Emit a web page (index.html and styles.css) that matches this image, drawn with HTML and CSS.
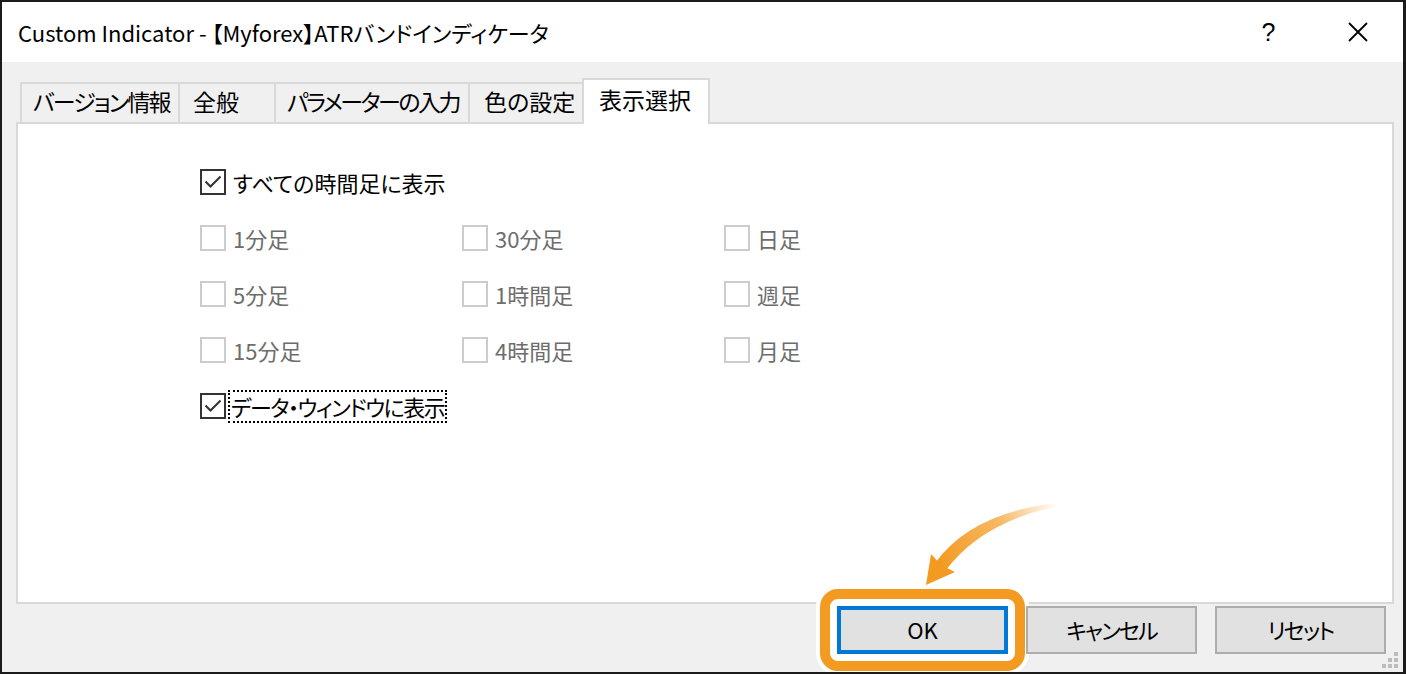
FILE: index.html
```html
<!DOCTYPE html>
<html lang="ja">
<head>
  <meta charset="UTF-8">
  <title>Custom Indicator</title>
  <link rel="stylesheet" href="styles.css">
</head>
<body>
  <div class="window">
    <div class="titlebar">
      <span class="title">Custom Indicator - 【Myforex】ATRバンドインディケータ</span>
      <span class="caption-btn help">?</span>
      <span class="caption-btn close">
        <svg width="20" height="20" viewBox="0 0 20 20"><path d="M1 1L19 19M19 1L1 19" stroke="#000" stroke-width="1.8" fill="none"/></svg>
      </span>
    </div>

    <div class="content">
      <div class="tabs">
        <div class="tab tab-version">バージョン情報</div>
        <div class="tab tab-general">全般</div>
        <div class="tab tab-params">パラメーターの入力</div>
        <div class="tab tab-colors">色の設定</div>
        <div class="tab tab-active">表示選択</div>
      </div>

      <div class="panel">
        <div class="options">
          <label class="check wide">
            <span class="box checked"><svg viewBox="0 0 22 22"><path d="M3.5 10.5L8.5 15.5L18.5 5.5" stroke="#333" stroke-width="2" fill="none"/></svg></span>
            <span>すべての時間足に表示</span>
          </label>
          <label class="check disabled"><span class="box"></span><span>1分足</span></label>
          <label class="check disabled"><span class="box"></span><span>30分足</span></label>
          <label class="check disabled"><span class="box"></span><span>日足</span></label>
          <label class="check disabled"><span class="box"></span><span>5分足</span></label>
          <label class="check disabled"><span class="box"></span><span>1時間足</span></label>
          <label class="check disabled"><span class="box"></span><span>週足</span></label>
          <label class="check disabled"><span class="box"></span><span>15分足</span></label>
          <label class="check disabled"><span class="box"></span><span>4時間足</span></label>
          <label class="check disabled"><span class="box"></span><span>月足</span></label>
          <label class="check wide">
            <span class="box checked"><svg viewBox="0 0 22 22"><path d="M3.5 10.5L8.5 15.5L18.5 5.5" stroke="#333" stroke-width="2" fill="none"/></svg></span>
            <span class="focus">データ・ウィンドウに表示</span>
          </label>
        </div>
      </div>

      <div class="footer">
        <div class="callout"><button class="btn btn-default">OK</button></div>
        <button class="btn">キャンセル</button>
        <button class="btn">リセット</button>
      </div>
    </div>

    <svg class="grip" width="16" height="16" viewBox="0 0 16 16">
      <rect x="12" y="0" width="4" height="4"/>
      <rect x="6" y="6" width="4" height="4"/>
      <rect x="12" y="6" width="4" height="4"/>
      <rect x="0" y="12" width="4" height="4"/>
      <rect x="6" y="12" width="4" height="4"/>
      <rect x="12" y="12" width="4" height="4"/>
    </svg>
  </div>

  <!-- annotation arrow pointing at OK -->
  <svg class="arrow" width="1406" height="674" viewBox="0 0 1406 674">
    <defs>
      <linearGradient id="fade" gradientUnits="userSpaceOnUse" x1="1058" y1="504" x2="940" y2="566">
        <stop offset="0" stop-color="#f39a21" stop-opacity="0"/>
        <stop offset="0.45" stop-color="#f39a21" stop-opacity="0.7"/>
        <stop offset="1" stop-color="#f39a21"/>
      </linearGradient>
    </defs>
    <path d="M1058 503Q972 512 935 563L946 570Q982 522 1058 506Z" fill="url(#fade)"/>
    <path d="M926 585L931 554L941 565L955 572Z" fill="#f39a21"/>
  </svg>
</body>
</html>
```

FILE: styles.css
```css
body {
  margin: 0;
  position: relative;
  font-family: "Noto Sans CJK JP", sans-serif;
  font-feature-settings: "palt";
  color: #000;
}
.window {
  width: 1406px;
  height: 674px;
  box-sizing: border-box;
  border: 2px solid #1b1b1b;
  border-right-width: 3px;
  background: #f0f0f0;
  display: flex;
  flex-direction: column;
  overflow: hidden;
  position: relative;
}
.titlebar {
  height: 60px;
  flex: none;
  background: #fff;
  display: flex;
  align-items: center;
  padding-left: 16px;
}
.title {
  font-size: 22px;
  flex: 1;
  padding-bottom: 1px;
}
.caption-btn {
  width: 91px;
  height: 60px;
  display: flex;
  align-items: center;
  justify-content: center;
}
.help {
  font-family: "Liberation Sans", sans-serif;
  font-size: 25px;
  padding-left: 4px;
  box-sizing: border-box;
}
.content {
  flex: 1;
  padding: 16px 9px 0 14px;
}
.tabs {
  display: flex;
  align-items: flex-end;
  height: 44px;
  padding-left: 4px;
}
.tab {
  height: 40px;
  box-sizing: border-box;
  border: 2px solid #d9d9d9;
  border-bottom: 0;
  margin-left: -2px;
  padding: 0 0 5px 11px;
  display: flex;
  align-items: center;
  font-size: 23px;
  white-space: nowrap;
}
.tab-version { width: 160px; margin-left: 0; letter-spacing: -1.9px; }
.tab-general { width: 98px; padding-left: 13px; }
.tab-params { width: 196px; letter-spacing: -2.5px; }
.tab-colors { width: 116px; padding-left: 14px; }
.tab-active {
  width: 128px;
  height: 46px;
  margin-bottom: -2px;
  padding: 0 0 7px 15px;
  background: #fff;
  position: relative;
  z-index: 1;
}
.panel {
  height: 482px;
  box-sizing: border-box;
  border: 2px solid #d9d9d9;
  background: #fff;
}
.options {
  display: grid;
  grid-template-columns: repeat(3, 262px);
  grid-auto-rows: 56px;
  padding: 30px 0 0 182px;
}
.check {
  display: flex;
  align-items: center;
  gap: 7px;
  font-size: 22px;
}
.check.wide {
  grid-column: 1 / -1;
}
.box {
  width: 26px;
  height: 26px;
  box-sizing: border-box;
  border: 2px solid #cccccc;
  flex: none;
}
.box.checked {
  border-color: #333;
}
.box svg {
  display: block;
  width: 22px;
  height: 22px;
}
.check.disabled {
  color: #6d6d6d;
}
.focus {
  border: 2px dotted #000;
  margin-left: -5px;
  padding: 0 1px 0 1px;
  line-height: 29px;
  letter-spacing: -1.5px;
}
.footer {
  display: flex;
  align-items: flex-start;
  justify-content: flex-end;
  gap: 18px;
  padding: 2px 8px 0 0;
}
.btn {
  width: 171px;
  height: 48px;
  box-sizing: border-box;
  border: 2px solid #adadad;
  background: #e1e1e1;
  font-family: inherit;
  font-feature-settings: "palt";
  font-size: 22px;
  letter-spacing: -1.8px;
  color: #000;
  padding: 0 0 2px;
}
.btn-default {
  display: block;
  border: 4px solid #0078d7;
  letter-spacing: 0;
}
.callout {
  margin: -17px;
  padding: 7px;
  border: 10px solid #f39a21;
  border-radius: 18px;
  background: #fff;
  box-shadow: 0 0 0 4px #fff;
}
.grip {
  position: absolute;
  right: 5px;
  bottom: 4px;
  fill: #bcbcbc;
}
.arrow {
  position: absolute;
  top: 0;
  left: 0;
  pointer-events: none;
}
```
